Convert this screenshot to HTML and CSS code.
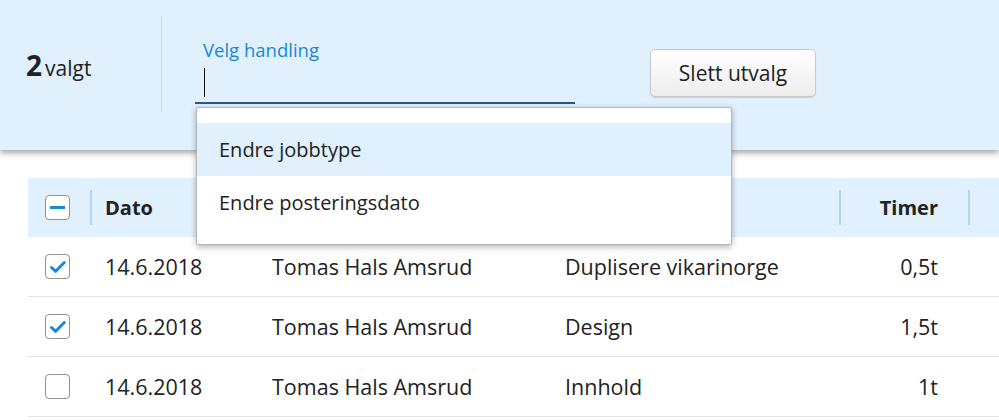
FILE: index.html
```html
<!DOCTYPE html>
<html lang="no">
<head>
<meta charset="utf-8">
<title>Valgte timer</title>
<link rel="stylesheet" href="styles.css">
</head>
<body>
<header class="topbar">
  <div class="count"><strong>2</strong><span class="count-label">valgt</span></div>
  <div class="sep"></div>
  <div class="field">
    <label class="field-label">Velg handling</label>
    <div class="field-input"><span class="caret"></span></div>
    <ul class="menu">
      <li class="menu-item active">Endre jobbtype</li>
      <li class="menu-item">Endre posteringsdato</li>
    </ul>
  </div>
  <button class="btn">Slett utvalg</button>
</header>

<div class="table">
  <div class="row head">
    <div class="cell cb"><span class="box minus"><span class="bar"></span></span></div>
    <div class="cell div">Dato</div>
    <div class="cell div">Ansatt</div>
    <div class="cell div">Jobbtype</div>
    <div class="cell div num">Timer</div>
    <div class="cell div"></div>
  </div>
  <div class="row">
    <div class="cell cb"><span class="box"><svg viewBox="0 0 22 22" width="22" height="22"><path d="M4.5 11.5l4.2 3.8 8.6-8.8" fill="none" stroke="#1b87d7" stroke-width="3" stroke-linecap="round" stroke-linejoin="round"/></svg></span></div>
    <div class="cell">14.6.2018</div>
    <div class="cell">Tomas Hals Amsrud</div>
    <div class="cell">Duplisere vikarinorge</div>
    <div class="cell num">0,5t</div>
    <div class="cell"></div>
  </div>
  <div class="row">
    <div class="cell cb"><span class="box"><svg viewBox="0 0 22 22" width="22" height="22"><path d="M4.5 11.5l4.2 3.8 8.6-8.8" fill="none" stroke="#1b87d7" stroke-width="3" stroke-linecap="round" stroke-linejoin="round"/></svg></span></div>
    <div class="cell">14.6.2018</div>
    <div class="cell">Tomas Hals Amsrud</div>
    <div class="cell">Design</div>
    <div class="cell num">1,5t</div>
    <div class="cell"></div>
  </div>
  <div class="row">
    <div class="cell cb"><span class="box"></span></div>
    <div class="cell">14.6.2018</div>
    <div class="cell">Tomas Hals Amsrud</div>
    <div class="cell">Innhold</div>
    <div class="cell num">1t</div>
    <div class="cell"></div>
  </div>
</div>
</body>
</html>
```

FILE: styles.css
```css
* { box-sizing: border-box; }
html, body { margin: 0; padding: 0; }
body {
  font-family: "Open Sans", "Noto Sans", sans-serif;
  color: #222;
  background: #fff;
  overflow: hidden;
  width: 999px;
  height: 420px;
}

.topbar {
  position: relative;
  z-index: 2;
  height: 150px;
  background: #e0f0fd;
  box-shadow: 0 3px 6px rgba(0,0,0,0.35);
  display: flex;
  align-items: flex-start;
  padding-top: 16px;
}

.count {
  flex: 0 0 161px;
  height: 96px;
  padding-left: 26px;
  display: flex;
  align-items: baseline;
  padding-top: 31px;
  line-height: 36px;
}
.count strong { font-size: 28px; font-weight: 700; margin-right: 3px; }
.count-label { font-size: 21px; }

.sep {
  flex: 0 0 1px;
  height: 96px;
  background: #cfd6dc;
}

.field {
  position: relative;
  flex: 0 0 380px;
  margin-left: 33px;
  padding-top: 22px;
}
.field-label {
  display: block;
  padding-left: 8px;
  font-size: 18.5px;
  line-height: 24px;
  color: #1a87d6;
}
.field-input {
  height: 42px;
  padding: 6px 0 0 8px;
  border-bottom: 2px solid #255b8d;
}
.caret {
  display: block;
  width: 1px;
  height: 29px;
  margin-left: 1px;
  background: #111;
}

.menu {
  position: absolute;
  left: 1px;
  top: 91px;
  width: 536px;
  margin: 0;
  padding: 15px 0;
  list-style: none;
  background: #fff;
  border: 1px solid #b5b5b5;
  border-radius: 2px;
  box-shadow: 0 2px 6px rgba(0,0,0,0.3);
  z-index: 5;
}
.menu-item {
  height: 53px;
  display: flex;
  align-items: center;
  padding-left: 22px;
  font-size: 20px;
}
.menu-item.active { background: #e0f0fd; }

.btn {
  flex: 0 0 166px;
  margin-left: 75px;
  margin-top: 33px;
  height: 48px;
  font-family: inherit;
  font-size: 21px;
  color: #222;
  background: linear-gradient(#ffffff, #ededed);
  border: 1px solid #c9c9c9;
  border-radius: 5px;
  box-shadow: 0 1px 1px rgba(0,0,0,0.12);
  padding: 0;
}

.table {
  margin: 28px 0 0 28px;
}
.row {
  display: grid;
  grid-template-columns: 62px 167px 293px 289px 129px 1fr;
  height: 60px;
  border-bottom: 1px solid #e4e4e4;
  font-size: 21.5px;
}
.row.head {
  height: 59px;
  background: #e0f0fd;
  border-bottom: none;
  font-weight: 700;
  font-size: 20px;
}
.cell {
  position: relative;
  display: flex;
  align-items: center;
  padding-left: 15px;
  white-space: nowrap;
}
.cell.num { justify-content: flex-end; padding-right: 30px; padding-left: 0; }
.cell.cb { padding-left: 17px; }
.head .cell.div::before {
  content: "";
  position: absolute;
  left: 0;
  top: 12px;
  width: 2px;
  height: 35px;
  background: #aed7f5;
}

.box {
  width: 25px;
  height: 25px;
  border: 1.5px solid #929292;
  border-radius: 4px;
  background: #fff;
  display: flex;
  align-items: center;
  justify-content: center;
}
.box svg { display: block; }
.bar {
  width: 15px;
  height: 3px;
  background: #1b87d7;
}
```
